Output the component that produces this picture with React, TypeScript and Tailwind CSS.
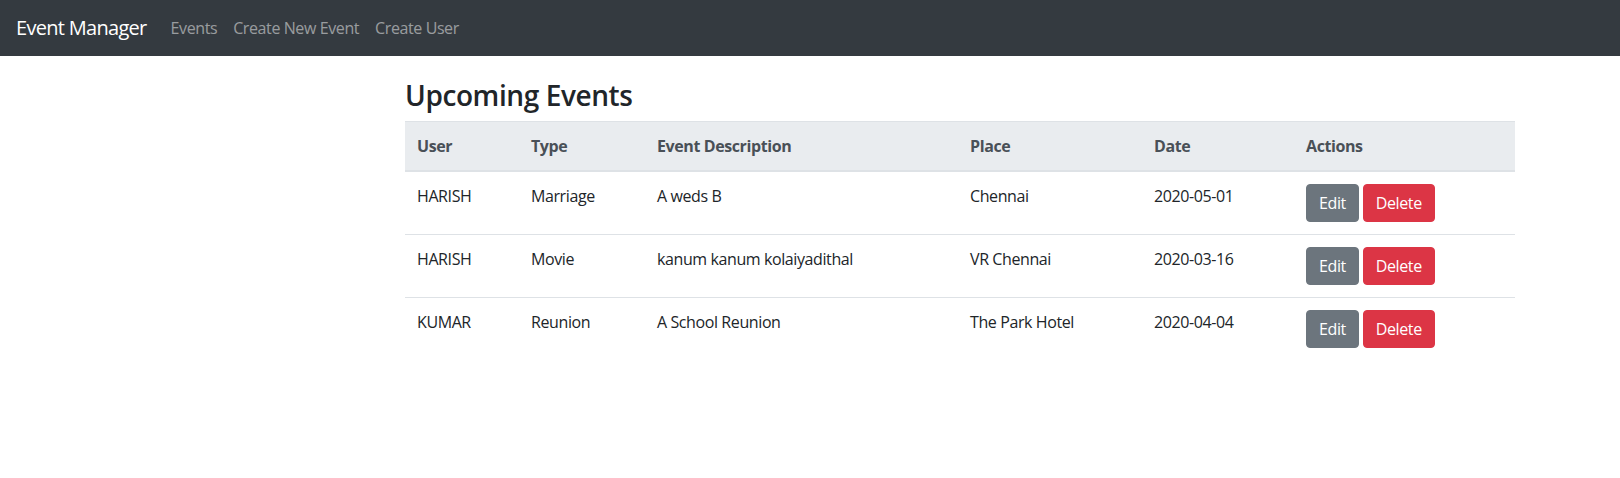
import React from "react";

const rows = [
  { user: "HARISH", type: "Marriage", desc: "A weds B", place: "Chennai", date: "2020-05-01" },
  { user: "HARISH", type: "Movie", desc: "kanum kanum kolaiyadithal", place: "VR Chennai", date: "2020-03-16" },
  { user: "KUMAR", type: "Reunion", desc: "A School Reunion", place: "The Park Hotel", date: "2020-04-04" },
];

export default function App() {
  return (
    <div className="min-h-[478px] bg-white text-[#212529] font-['Segoe_UI','Open_Sans',sans-serif] text-base leading-6 tracking-[-0.025em]">
      <nav className="flex h-14 items-center bg-[#343a40] px-4">
        <a className="mr-4 text-xl leading-[30px] tracking-[-0.035em] text-white">Event Manager</a>
        <ul className="flex">
          <li><a className="block px-2 py-2 text-white/50">Events</a></li>
          <li><a className="block px-2 py-2 text-white/50">Create New Event</a></li>
          <li><a className="block px-2 py-2 text-white/50">Create User</a></li>
        </ul>
      </nav>
      <main className="ml-[390px] w-[1140px] px-[15px] pt-[23px]">
        <h3 className="mb-2 text-[28px] font-semibold leading-[1.2]">Upcoming Events</h3>
        <table className="w-full border-collapse text-left">
          <thead>
            <tr className="bg-[#e9ecef] text-[#495057]">
              <th className="w-[114px] border-t border-b-2 border-[#dee2e6] p-3 align-bottom font-bold">User</th>
              <th className="w-[126px] border-t border-b-2 border-[#dee2e6] p-3 align-bottom font-bold">Type</th>
              <th className="w-[313px] border-t border-b-2 border-[#dee2e6] p-3 align-bottom font-bold">Event Description</th>
              <th className="w-[184px] border-t border-b-2 border-[#dee2e6] p-3 align-bottom font-bold">Place</th>
              <th className="w-[152px] border-t border-b-2 border-[#dee2e6] p-3 align-bottom font-bold">Date</th>
              <th className="border-t border-b-2 border-[#dee2e6] p-3 align-bottom font-bold">Actions</th>
            </tr>
          </thead>
          <tbody>
            {rows.map((r, i) => (
              <tr key={i}>
                <td className="border-t border-[#dee2e6] p-3 align-top">{r.user}</td>
                <td className="border-t border-[#dee2e6] p-3 align-top">{r.type}</td>
                <td className="border-t border-[#dee2e6] p-3 align-top">{r.desc}</td>
                <td className="border-t border-[#dee2e6] p-3 align-top">{r.place}</td>
                <td className="border-t border-[#dee2e6] p-3 align-top">{r.date}</td>
                <td className="border-t border-[#dee2e6] p-3 align-top">
                  <div className="flex gap-1">
                    <button className="h-[38px] rounded border border-[#6c757d] bg-[#6c757d] px-3 text-white">Edit</button>
                    <button className="h-[38px] rounded border border-[#dc3545] bg-[#dc3545] px-3 text-white">Delete</button>
                  </div>
                </td>
              </tr>
            ))}
          </tbody>
        </table>
      </main>
    </div>
  );
}
